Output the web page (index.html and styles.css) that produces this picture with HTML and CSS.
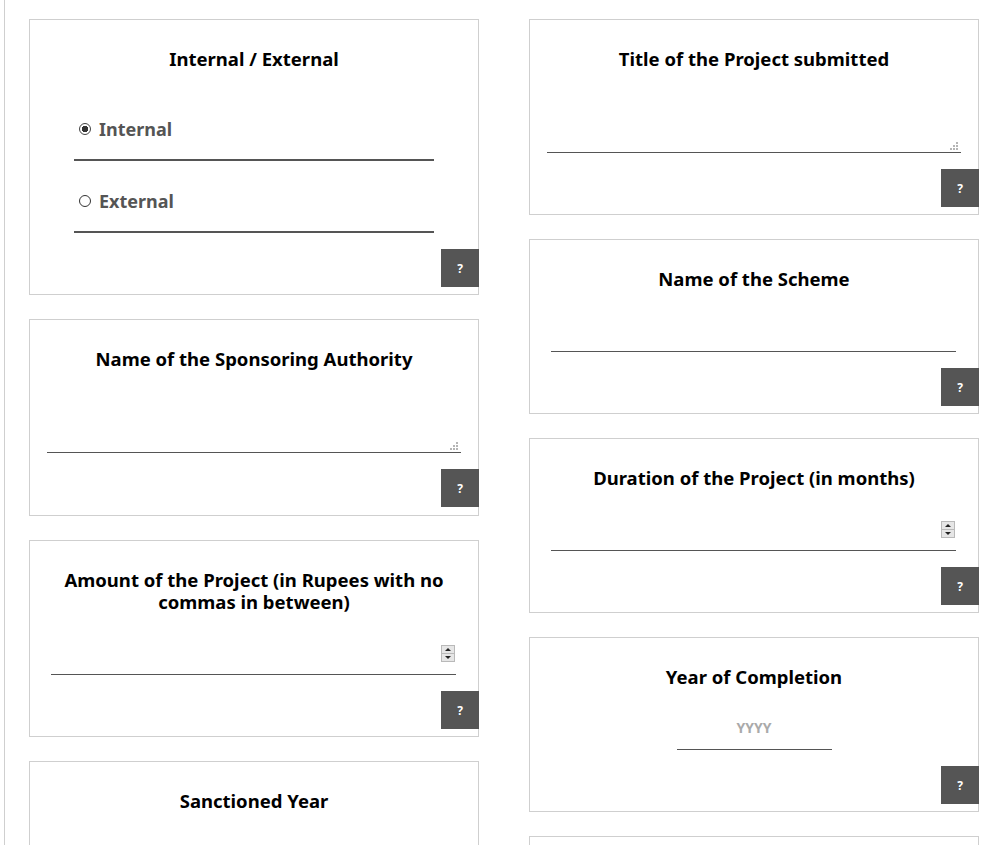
FILE: index.html
```html
<!DOCTYPE html>
<html lang="en">
<head>
  <meta charset="UTF-8" />
  <meta name="viewport" content="width=device-width, initial-scale=1.0" />
  <title>Project Details</title>
  <link rel="stylesheet" href="styles.css">
</head>
<body>

  <div class="form-wrap">
    <!-- Left column -->
    <div class="column">
      <div class="card">
        <h3 class="card-title">Internal / External</h3>
        <div class="radio-group">
          <label class="radio-option"><input type="radio" name="projType" checked /> Internal</label>
          <label class="radio-option"><input type="radio" name="projType" /> External</label>
        </div>
        <div class="help-row"><button class="help-btn" type="button">?</button></div>
      </div>

      <div class="card card-tall">
        <h3 class="card-title">Name of the Sponsoring Authority</h3>
        <div class="area-wrap">
          <textarea class="area-field" rows="2"></textarea>
          <svg class="grip" width="9" height="9" viewBox="0 0 9 9">
            <rect x="7" y="1" width="2" height="2" fill="#b5b5b5"/>
            <rect x="4" y="4" width="2" height="2" fill="#b5b5b5"/>
            <rect x="7" y="4" width="2" height="2" fill="#b5b5b5"/>
            <rect x="1" y="7" width="2" height="2" fill="#b5b5b5"/>
            <rect x="4" y="7" width="2" height="2" fill="#b5b5b5"/>
            <rect x="7" y="7" width="2" height="2" fill="#b5b5b5"/>
          </svg>
        </div>
        <div class="help-row"><button class="help-btn" type="button">?</button></div>
      </div>

      <div class="card">
        <h3 class="card-title">Amount of the Project (in Rupees with no commas in between)</h3>
        <div class="num-wrap">
          <input class="text-field" type="number" />
          <svg class="spinner" width="14" height="17" viewBox="0 0 14 17">
            <rect x="0.5" y="0.5" width="13" height="16" fill="#e6e6e6" stroke="#b9b9b9"/>
            <line x1="1" y1="8.5" x2="13" y2="8.5" stroke="#b9b9b9"/>
            <path d="M4 6 L7 3 L10 6 Z" fill="#222"/>
            <path d="M4 11 L7 14 L10 11 Z" fill="#222"/>
          </svg>
        </div>
        <div class="help-row"><button class="help-btn" type="button">?</button></div>
      </div>

      <div class="card">
        <h3 class="card-title">Sanctioned Year</h3>
        <input class="year-field" type="text" placeholder="YYYY" />
        <div class="help-row"><button class="help-btn" type="button">?</button></div>
      </div>
    </div>

    <!-- Right column -->
    <div class="column">
      <div class="card">
        <h3 class="card-title">Title of the Project submitted</h3>
        <div class="area-wrap">
          <textarea class="area-field" rows="2"></textarea>
          <svg class="grip" width="9" height="9" viewBox="0 0 9 9">
            <rect x="7" y="1" width="2" height="2" fill="#b5b5b5"/>
            <rect x="4" y="4" width="2" height="2" fill="#b5b5b5"/>
            <rect x="7" y="4" width="2" height="2" fill="#b5b5b5"/>
            <rect x="1" y="7" width="2" height="2" fill="#b5b5b5"/>
            <rect x="4" y="7" width="2" height="2" fill="#b5b5b5"/>
            <rect x="7" y="7" width="2" height="2" fill="#b5b5b5"/>
          </svg>
        </div>
        <div class="help-row"><button class="help-btn" type="button">?</button></div>
      </div>

      <div class="card">
        <h3 class="card-title">Name of the Scheme</h3>
        <input class="text-field" type="text" />
        <div class="help-row"><button class="help-btn" type="button">?</button></div>
      </div>

      <div class="card">
        <h3 class="card-title">Duration of the Project (in months)</h3>
        <div class="num-wrap">
          <input class="text-field" type="number" />
          <svg class="spinner" width="14" height="17" viewBox="0 0 14 17">
            <rect x="0.5" y="0.5" width="13" height="16" fill="#e6e6e6" stroke="#b9b9b9"/>
            <line x1="1" y1="8.5" x2="13" y2="8.5" stroke="#b9b9b9"/>
            <path d="M4 6 L7 3 L10 6 Z" fill="#222"/>
            <path d="M4 11 L7 14 L10 11 Z" fill="#222"/>
          </svg>
        </div>
        <div class="help-row"><button class="help-btn" type="button">?</button></div>
      </div>

      <div class="card">
        <h3 class="card-title">Year of Completion</h3>
        <input class="year-field" type="text" placeholder="YYYY" />
        <div class="help-row"><button class="help-btn" type="button">?</button></div>
      </div>

      <div class="card">
        <h3 class="card-title">Status of the Project</h3>
        <input class="text-field" type="text" />
        <div class="help-row"><button class="help-btn" type="button">?</button></div>
      </div>
    </div>
  </div>

</body>
</html>
```

FILE: styles.css
```css
body {
  margin: 0;
  font-family: "Noto Sans", "Open Sans", Arial, sans-serif;
  background: #fff;
  color: #000;
}

/* Two column form */
.form-wrap {
  display: flex;
  gap: 50px;
  margin-left: 4px;
  padding: 19px 0 0 24px;
  border-left: 1px solid #cfcfcf;
  min-height: 900px;
  box-sizing: border-box;
}

.column {
  width: 450px;
  display: flex;
  flex-direction: column;
  gap: 24px;
}

.card {
  border: 1px solid #cfcfcf;
  padding: 28px 0 7px 0;
  background: #fff;
}

.card-tall {
  padding-bottom: 8px;
}

.card-title {
  margin: 0;
  padding: 0 30px;
  font-size: 18.5px;
  line-height: 22px;
  font-weight: bold;
  text-align: center;
}

/* Radio buttons */
.radio-group {
  margin: 19px 44px 0 44px;
}

.radio-option {
  display: flex;
  align-items: center;
  gap: 8px;
  padding: 29px 0 19px 5px;
  line-height: 22px;
  border-bottom: 2px solid #555;
  font-size: 18px;
  font-weight: bold;
  color: #555;
}

.radio-option input {
  appearance: none;
  -webkit-appearance: none;
  margin: 0;
  width: 12px;
  height: 12px;
  border: 1px solid #333;
  border-radius: 50%;
  box-sizing: border-box;
}

.radio-option input:checked {
  border-color: #444;
  background: radial-gradient(circle, #333 0 3px, #fff 3.5px);
}

/* Text fields */
.text-field {
  display: block;
  width: 405px;
  height: 36px;
  margin: 26px 0 0 21px;
  padding: 0 4px;
  border: none;
  border-bottom: 1px solid #555;
  box-sizing: border-box;
  font: inherit;
  outline: none;
  -moz-appearance: textfield;
}

.text-field::-webkit-inner-spin-button,
.text-field::-webkit-outer-spin-button {
  -webkit-appearance: none;
  margin: 0;
}

.num-wrap {
  position: relative;
}

.spinner {
  position: absolute;
  left: 411px;
  bottom: 13px;
}

.area-wrap {
  position: relative;
  width: 414px;
  margin: 26px 0 0 17px;
}

.area-field {
  display: block;
  width: 414px;
  height: 57px;
  border: none;
  border-bottom: 1px solid #555;
  box-sizing: border-box;
  resize: none;
  font: inherit;
  outline: none;
}

.grip {
  position: absolute;
  right: 3px;
  bottom: 3px;
}

.year-field {
  display: block;
  width: 155px;
  height: 36px;
  margin: 26px auto 0;
  padding: 0 0 8px 0;
  border: none;
  border-bottom: 1px solid #555;
  box-sizing: border-box;
  text-align: center;
  font-family: inherit;
  font-size: 14px;
  font-weight: bold;
  outline: none;
}

.year-field::placeholder {
  color: #aaa;
}

/* Help button */
.help-row {
  display: flex;
  justify-content: flex-end;
  margin-top: 16px;
  margin-right: -1px;
}

.help-btn {
  width: 38px;
  height: 38px;
  border: none;
  background: #555;
  color: #fff;
  font-family: inherit;
  font-size: 12px;
  font-weight: bold;
  padding: 0;
  cursor: pointer;
}
```
